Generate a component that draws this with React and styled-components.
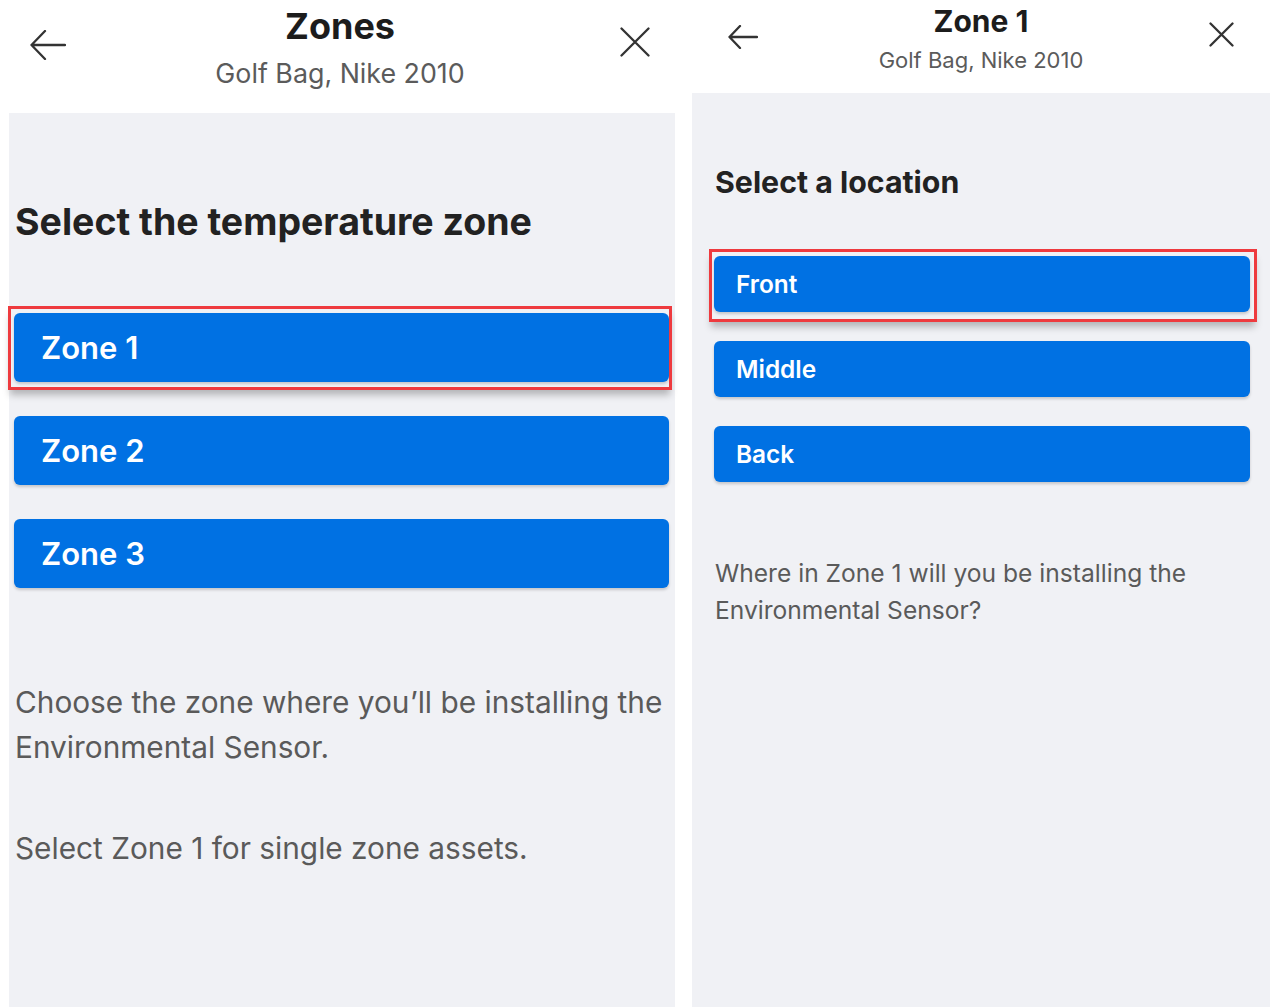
import styled, { createGlobalStyle } from "styled-components";

const GlobalStyle = createGlobalStyle`
  html, body {
    margin: 0;
    padding: 0;
    background: #ffffff;
    font-family: Inter, "Noto Sans", "Liberation Sans", sans-serif;
  }
`;

const BLUE = "#0071e3";
const GRAY_BG = "#f0f1f5";
const RED = "#ee3a3e";

// sizes for the two screenshots (they are scaled differently)
const big = {
  width: 676,
  headerH: 113,
  padL: 30,
  padR: 26,
  iconCell: 36,
  titleSize: 36,
  titleLh: 40,
  titleTop: 6,
  subSize: 26.8,
  subLh: 32,
  subGap: 11,
  bodyMarginL: 9,
  bodyW: 666,
  bodyPad: "87px 6px 0 5px",
  headSize: 37.5,
  headLh: 44,
  listTop: 69,
  btnH: 69,
  btnGap: 34,
  btnSize: 31,
  btnPadL: 27,
  ring: "-7px -3px -8px -6px",
  paraTop: 92,
  paraSize: 29.8,
  paraLh: 45,
  para2Top: 56,
};

const small = {
  width: 580,
  headerH: 93,
  padL: 36,
  padR: 38,
  iconCell: 30,
  titleSize: 30,
  titleLh: 34,
  titleTop: 4,
  subSize: 22,
  subLh: 26,
  subGap: 9,
  bodyMarginL: 0,
  bodyW: 578,
  bodyPad: "71px 20px 0 22px",
  headSize: 30.3,
  headLh: 36,
  listTop: 56,
  btnH: 56,
  btnGap: 29,
  btnSize: 24.4,
  btnPadL: 22,
  ring: "-7px -7px -10px -5px",
  paraTop: 73,
  paraSize: 24.6,
  paraLh: 37,
  para2Top: 40,
};

const BackIcon = ({ w, h, top }) => (
  <IconBox $top={top} $align="flex-start">
    <svg width={w} height={h} viewBox={`0 0 ${w} ${h}`} fill="none">
      <path
        d={`M${w - 1} ${h / 2} H1.5 M${h / 2} 1 L1.5 ${h / 2} L${h / 2} ${h - 1}`}
        stroke="#333"
        strokeWidth="2.3"
        strokeLinecap="round"
        strokeLinejoin="round"
      />
    </svg>
  </IconBox>
);

const CloseIcon = ({ s, top }) => (
  <IconBox $top={top} $align="flex-end">
    <svg width={s} height={s} viewBox={`0 0 ${s} ${s}`} fill="none">
      <path
        d={`M1.5 1.5 L${s - 1.5} ${s - 1.5} M${s - 1.5} 1.5 L1.5 ${s - 1.5}`}
        stroke="#333"
        strokeWidth="2.3"
        strokeLinecap="round"
      />
    </svg>
  </IconBox>
);

const Screen = ({ m, title, icons, heading, options, paragraphs }) => (
  <Panel $m={m}>
    <Header $m={m}>
      <BackIcon {...icons.back} />
      <TitleBlock $m={m}>
        <Title $m={m}>{title}</Title>
        <Subtitle $m={m}>Golf Bag, Nike 2010</Subtitle>
      </TitleBlock>
      <CloseIcon {...icons.close} />
    </Header>
    <Body $m={m}>
      <Heading $m={m}>{heading}</Heading>
      <OptionList $m={m}>
        {options.map((label, i) => (
          <OptionButton key={label} $m={m} $highlight={i === 0}>
            {label}
          </OptionButton>
        ))}
      </OptionList>
      {paragraphs.map((p, i) => (
        <Para key={i} $m={m} $first={i === 0}>
          {p}
        </Para>
      ))}
    </Body>
  </Panel>
);

const App = () => {
  return (
    <>
      <GlobalStyle />
      <Page>
        <Screen
          m={big}
          title="Zones"
          icons={{ back: { w: 36, h: 30, top: 30 }, close: { s: 30, top: 27 } }}
          heading="Select the temperature zone"
          options={["Zone 1", "Zone 2", "Zone 3"]}
          paragraphs={[
            "Choose the zone where you’ll be installing the Environmental Sensor.",
            "Select Zone 1 for single zone assets.",
          ]}
        />
        <Screen
          m={small}
          title="Zone 1"
          icons={{ back: { w: 30, h: 24, top: 25 }, close: { s: 25, top: 22 } }}
          heading="Select a location"
          options={["Front", "Middle", "Back"]}
          paragraphs={[
            "Where in Zone 1 will you be installing the Environmental Sensor?",
          ]}
        />
      </Page>
    </>
  );
};

const Page = styled.div`
  display: flex;
  gap: 16px;
  width: 1280px;
  height: 1007px;
  overflow: hidden;
  background: #fff;
`;

const Panel = styled.div`
  display: flex;
  flex-direction: column;
  width: ${({ $m }) => $m.width}px;
  flex-shrink: 0;
  height: 100%;
`;

const Header = styled.div`
  display: grid;
  grid-template-columns: ${({ $m }) => `${$m.iconCell}px 1fr ${$m.iconCell}px`};
  align-items: start;
  height: ${({ $m }) => $m.headerH}px;
  padding: 0 ${({ $m }) => $m.padR}px 0 ${({ $m }) => $m.padL}px;
  background: #fff;
  flex-shrink: 0;
`;

const IconBox = styled.div`
  display: flex;
  justify-content: ${({ $align }) => $align};
  margin-top: ${({ $top }) => $top}px;
`;

const TitleBlock = styled.div`
  display: flex;
  flex-direction: column;
  align-items: center;
  padding-top: ${({ $m }) => $m.titleTop}px;
`;

const Title = styled.div`
  font-size: ${({ $m }) => $m.titleSize}px;
  line-height: ${({ $m }) => $m.titleLh}px;
  font-weight: 700;
  color: #1c1c1c;
`;

const Subtitle = styled.div`
  margin-top: ${({ $m }) => $m.subGap}px;
  font-size: ${({ $m }) => $m.subSize}px;
  line-height: ${({ $m }) => $m.subLh}px;
  color: #5b5b5b;
`;

const Body = styled.div`
  flex: 1;
  margin-left: ${({ $m }) => $m.bodyMarginL}px;
  width: ${({ $m }) => $m.bodyW}px;
  box-sizing: border-box;
  padding: ${({ $m }) => $m.bodyPad};
  background: ${GRAY_BG};
`;

const Heading = styled.h1`
  margin: 0;
  padding-left: 1px;
  font-size: ${({ $m }) => $m.headSize}px;
  line-height: ${({ $m }) => $m.headLh}px;
  font-weight: 700;
  color: #222;
`;

const OptionList = styled.div`
  display: flex;
  flex-direction: column;
  gap: ${({ $m }) => $m.btnGap}px;
  margin-top: ${({ $m }) => $m.listTop}px;
`;

const OptionButton = styled.button`
  position: relative;
  display: flex;
  align-items: center;
  height: ${({ $m }) => $m.btnH}px;
  padding: 0 0 0 ${({ $m }) => $m.btnPadL}px;
  border: none;
  border-radius: 6px;
  background: ${BLUE};
  color: #fff;
  font-family: inherit;
  font-size: ${({ $m }) => $m.btnSize}px;
  font-weight: 600;
  text-align: left;
  box-shadow: 0 2px 3px rgba(0, 0, 0, 0.18);

  /* red annotation box drawn over the highlighted option */
  &::after {
    content: "";
    display: ${({ $highlight }) => ($highlight ? "block" : "none")};
    position: absolute;
    inset: ${({ $m }) => $m.ring};
    border: 3.5px solid ${RED};
    box-shadow: 0 7px 7px -2px rgba(0, 0, 0, 0.25);
    pointer-events: none;
  }
`;

const Para = styled.p`
  margin: ${({ $m, $first }) => ($first ? $m.paraTop : $m.para2Top)}px 0 0;
  padding-left: 1px;
  font-size: ${({ $m }) => $m.paraSize}px;
  line-height: ${({ $m }) => $m.paraLh}px;
  color: #5a5a5a;
`;

export default App;
